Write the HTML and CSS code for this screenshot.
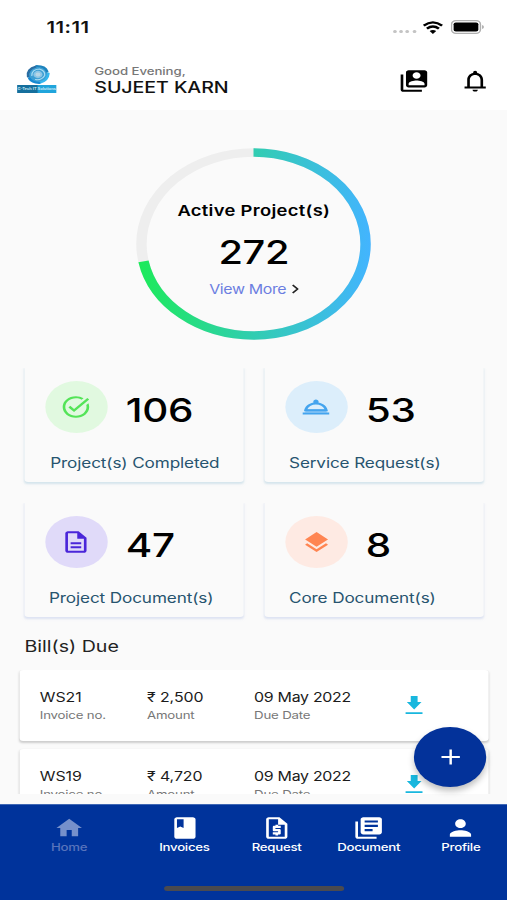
FILE: index.html
```html
<!DOCTYPE html>
<html lang="en">
<head>
<meta charset="utf-8">
<meta name="viewport" content="width=device-width, initial-scale=1">
<title>Dashboard</title>
<link rel="stylesheet" href="styles.css">
</head>
<body>
<div class="app">
  <header class="top">
    <div class="status">
      <span class="time">11:11</span>
      <div class="status-icons">
        <span class="dots"><i></i><i></i><i></i><i></i></span>
        <svg class="wifi" viewBox="0 0 17 13" preserveAspectRatio="none"><path d="M1 4.7Q8.500-1.900 16 4.700M3.600 7.600Q8.500 3.400 13.400 7.600" fill="none" stroke="#000" stroke-width="2.200"/><path d="M5.800 10q2.700-2.200 5.400 0l-2.700 3z"/></svg>
        <svg class="battery" viewBox="0 0 28 14"><rect x=".7" y=".7" width="23.600" height="12.600" rx="3.600" fill="none" stroke="#b0b0b0" stroke-width="1.200"/><rect x="2.400" y="2.500" width="20.200" height="9" rx="1.800"/><path d="M25.800 5v4q1.200-.6 1.200-2t-1.200-2z" fill="#999"/></svg>
      </div>
    </div>
    <div class="bar">
      <div class="logo">
        <svg class="swirl" viewBox="0 0 20 20"><circle cx="10" cy="10" r="8.200" fill="#3d9fd4"/><g fill="none" stroke-width="2.200" stroke-linecap="round"><path d="M2 12A8.300 8.300 0 0 1 8 2.200" stroke="#2a6da2"/><path d="M9 1.500Q16 1.500 17.500 7" stroke="#1d83bd"/><path d="M18.500 9Q18 16 12 18" stroke="#35b7ee"/><path d="M11 18.500Q5 18 3 14" stroke="#1689d2"/><path d="M5 11Q5 5 11 4.500M11 4.500Q16 6 15.500 11M15.500 11Q13 16 8 15" stroke="#a8dcf3" stroke-width="1"/></g><circle cx="10" cy="10" r="3.700" fill="#8cc5e5"/><circle cx="10" cy="10" r="2" fill="#b7d6e6"/></svg>
        <span class="logo-name">G-Tech IT Solutions</span>
      </div>
      <div class="greet">
        <span class="hello">Good Evening,</span>
        <span class="user">SUJEET KARN</span>
      </div>
      <svg class="icon accounts" viewBox="0 0 24 24"><path d="M4 6H2v14c0 1.100.9 2 2 2h14v-2H4V6zm16-4H8c-1.100 0-2 .9-2 2v12c0 1.100.9 2 2 2h12c1.100 0 2-.9 2-2V4c0-1.100-.9-2-2-2zm-6 2c1.660 0 3 1.340 3 3s-1.340 3-3 3-3-1.340-3-3 1.340-3 3-3zm6 12H8v-1.500c0-1.990 4-3 6-3s6 1.010 6 3V16z"/></svg>
      <svg class="icon bell" viewBox="0 0 24 24"><path fill-rule="evenodd" d="M10 20h4c0 1.100-.9 1.800-2 1.800s-2-.7-2-1.800zM4 17h2v-6c0-3.070 1.640-5.640 4.500-6.320V4c0-.83.67-1.500 1.500-1.500s1.500.67 1.500 1.500v.68C16.370 5.360 18 7.930 18 11v6h2v2H4zm4 0h8v-6c0-2.480-1.510-4.500-4-4.500S8 8.520 8 11z"/></svg>
    </div>
  </header>

  <main class="content">
    <section class="ring">
      <svg class="ring-art" viewBox="0 0 192 192">
        <defs><linearGradient id="sweep" gradientUnits="userSpaceOnUse" x1="0" y1="0" x2="0" y2="192"><stop offset="0" stop-color="#1ceb58"/><stop offset=".5" stop-color="#31cdb1"/><stop offset="1" stop-color="#43b4ff"/></linearGradient></defs>
        <circle cx="96" cy="96" r="91.500" fill="none" stroke="#eee" stroke-width="8.500"/>
        <circle cx="96" cy="96" r="91.500" fill="none" stroke="url(#sweep)" stroke-width="8.500" pathLength="100" stroke-dasharray="72 100" transform="rotate(-90 96 96)"/>
      </svg>
      <div class="ring-text">
        <span class="ring-title">Active Project(s)</span>
        <span class="ring-value">272</span>
        <span class="more">View More <svg viewBox="0 0 6 10"><path d="M1 1l4 4-4 4" fill="none" stroke="#222" stroke-width="1.500"/></svg></span>
      </div>
    </section>

    <section class="cards">
      <article class="card green">
        <div class="card-top"><span class="disc"><svg class="icon" viewBox="0 0 24 24"><path d="M22 5.180L10.590 16.600l-4.240-4.240 1.410-1.410 2.830 2.830 10-10L22 5.180zm-2.210 5.040c.13.57.21 1.170.21 1.780 0 4.420-3.580 8-8 8s-8-3.580-8-8 3.580-8 8-8c1.580 0 3.040.46 4.280 1.250l1.440-1.440C16.100 2.670 14.130 2 12 2 6.480 2 2 6.480 2 12s4.480 10 10 10 10-4.480 10-10c0-1.190-.22-2.330-.6-3.390l-1.610 1.610z"/></svg></span><span class="count">106</span></div>
        <span class="label l1">Project(s) Completed</span>
      </article>
      <article class="card blue">
        <div class="card-top"><span class="disc"><svg class="icon" viewBox="0 0 24 24"><path d="M5 14h14l1.500 3h-17z" opacity=".55"/><path fill-rule="evenodd" d="M2 17h20v2H2zM13.840 7.790c.1-.24.16-.51.16-.79 0-1.100-.9-2-2-2s-2 .9-2 2c0 .28.06.55.16.79C6.250 8.600 3.270 11.930 3 16h18c-.27-4.070-3.250-7.400-7.160-8.210zM12 9.580c2.950 0 5.470 1.830 6.500 4.410h-13c1.030-2.580 3.550-4.410 6.500-4.410z"/></svg></span><span class="count">53</span></div>
        <span class="label l2">Service Request(s)</span>
      </article>
      <article class="card violet">
        <div class="card-top"><span class="disc"><svg class="icon" viewBox="0 0 24 24"><path d="M8 16h8v1.700H8zm0-3.700h8V14H8zM14 2H6c-1.100 0-2 .9-2 2v16c0 1.100.89 2 1.990 2H18c1.100 0 2-.9 2-2V8l-6-6zm4 18H6V4h7v5h5v11z"/></svg></span><span class="count">47</span></div>
        <span class="label l3">Project Document(s)</span>
      </article>
      <article class="card orange">
        <div class="card-top"><span class="disc"><svg class="icon layers" viewBox="0 0 24 24"><path d="M11.990 18.540l-7.370-5.730L3 14.070l9 7 9-7-1.630-1.270-7.380 5.740zM12 16l7.360-5.730L21 9l-9-7-9 7 1.630 1.270L12 16z"/></svg></span><span class="count">8</span></div>
        <span class="label l4">Core Document(s)</span>
      </article>
    </section>

    <h2 class="bills-title">Bill(s) Due</h2>
    <section class="bills">
      <article class="bill">
        <div class="cell"><b>WS21</b><small>Invoice no.</small></div>
        <div class="cell"><b>₹ 2,500</b><small>Amount</small></div>
        <div class="cell date"><b>09 May 2022</b><small>Due Date</small></div>
        <svg class="dl" viewBox="0 0 14.400 18.500"><path d="M4.400 0h5.600v6h3.200l-6 7.500-6-7.500h3.200zM0 16.300h14.400v2.200H0z"/></svg>
      </article>
      <article class="bill">
        <div class="cell"><b>WS19</b><small>Invoice no.</small></div>
        <div class="cell"><b>₹ 4,720</b><small>Amount</small></div>
        <div class="cell date"><b>09 May 2022</b><small>Due Date</small></div>
        <svg class="dl" viewBox="0 0 14.400 18.500"><path d="M4.400 0h5.600v6h3.200l-6 7.500-6-7.500h3.200zM0 16.300h14.400v2.200H0z"/></svg>
      </article>
    </section>
    <button class="fab" aria-label="Add"><svg viewBox="0 0 16 16"><path d="M8 .5v15M.5 8h15" stroke="#fff" stroke-width="2"/></svg></button>
  </main>

  <nav class="nav">
    <div class="tabs">
      <a class="tab active"><svg class="icon" viewBox="0 0 24 24"><path d="M10 20v-6h4v6h5v-8h3L12 3 2 12h3v8z"/></svg><span>Home</span></a>
      <a class="tab"><svg class="icon" viewBox="0 0 24 24"><path fill-rule="evenodd" d="M18 2H6c-1.100 0-2 .9-2 2v16c0 1.100.9 2 2 2h12c1.100 0 2-.9 2-2V4c0-1.100-.9-2-2-2zM6 4h5v8l-2.500-1.500L6 12V4z"/></svg><span>Invoices</span></a>
      <a class="tab"><svg class="icon" viewBox="0 0 24 24"><path fill-rule="evenodd" d="M14 2H6c-1.100 0-2 .9-2 2v16c0 1.100.9 2 2 2h12c1.100 0 2-.9 2-2V8zM6 20V4h7v5h5v11z"/><path d="M11 19h2v-1h1c.55 0 1-.45 1-1v-3c0-.55-.45-1-1-1h-3v-1h4v-2h-2V9h-2v1h-1c-.55 0-1 .45-1 1v3c0 .55.45 1 1 1h3v1H9v2h2z"/></svg><span>Request</span></a>
      <a class="tab"><svg class="icon" viewBox="0 0 24 24"><path fill-rule="evenodd" d="M4 6H2v14c0 1.100.9 2 2 2h14v-2H4zM20 2H8c-1.100 0-2 .9-2 2v12c0 1.100.9 2 2 2h12c1.100 0 2-.9 2-2V4c0-1.100-.9-2-2-2zM19 7H9V5h10zM19 11H9V9h10zM15 15H9v-2h6z"/></svg><span>Document</span></a>
      <a class="tab"><svg class="icon" viewBox="0 0 24 24"><path d="M12 12c2.210 0 4-1.790 4-4s-1.790-4-4-4-4 1.790-4 4 1.790 4 4 4zm0 2c-2.670 0-8 1.340-8 4v2h16v-2c0-2.660-5.330-4-8-4z"/></svg><span>Profile</span></a>
    </div>
    <div class="home-bar"></div>
  </nav>
</div>
</body>
</html>
```
FILE: styles.css
```css
* { box-sizing: border-box; }
html, body { margin: 0; width: 507px; height: 900px; overflow: hidden; }
body { font-family: Inter, "Liberation Sans", sans-serif; color: #111; background: #fafafa; }

/* 414-unit wide phone layout, widened to fill the viewport */
.app {
  width: 414px; height: 900px;
  display: flex; flex-direction: column;
  transform: scaleX(1.22464); transform-origin: 0 0;
  background: #fafafa;
}
.icon { display: block; width: 26px; height: 26px; fill: currentColor; flex: none; }
span, b, small, h2 { white-space: nowrap; }

.top { height: 110px; background: #fff; flex: none; }
.status { height: 54px; padding: 0 18px 0 38px; display: flex; justify-content: space-between; align-items: center; }
.time { font-size: 16.500px; font-weight: 600; letter-spacing: .4px; color: #111; }
.status-icons { display: flex; align-items: center; gap: 6px; }
.dots { display: flex; gap: 2.2px; padding-top: 9px; margin-right: -.5px; }
.dots i { width: 3px; height: 3.500px; border-radius: 50%; background: #c4c4c4; }
.wifi { width: 17px; height: 13px; }
.battery { width: 28px; height: 14px; }

.bar { height: 56px; display: flex; align-items: center; padding-left: 14px; }
.logo { width: 32px; height: 30px; display: flex; flex-direction: column; align-items: center; margin-top: -6px; }
.swirl { width: 20px; height: 21px; flex: none; margin-left: 1.5px; }
.logo-name {
  width: 32px; height: 8px; line-height: 8px; text-align: center;
  font-size: 3.300px; font-weight: 600; color: #d9f0fa;
  background: linear-gradient(90deg, #156f9d 50%, #20a5dc 55%);
}
.greet { display: flex; flex-direction: column; width: 249px; margin-left: 31px; margin-top: -4px; }
.hello { font-size: 10.800px; line-height: 14px; letter-spacing: -.05px; color: #777; font-weight: 500; }
.user { font-size: 16px; line-height: 16px; letter-spacing: -.05px; font-weight: 500; color: #111; }
.accounts { margin: -2px 0 0 -1px; color: #000; }
.bell { margin: -2px 0 0 24px; color: #000; }

.content { flex: 1; min-height: 0; position: relative; }
.ring { height: 229px; padding-top: 38px; display: grid; justify-content: center; }
.ring > * { grid-area: 1 / 1; }
.ring-art { width: 192px; height: 192px; margin-left: .5px; }
.ring-text { width: 192px; height: 192px; display: flex; flex-direction: column; align-items: center; padding-top: 53px; margin-left: .5px; }
.ring-title { font-size: 15px; line-height: 20px; font-weight: 600; letter-spacing: .25px; color: #000; }
.ring-value { font-size: 32.500px; line-height: 40px; margin-top: 12px; font-weight: 450; letter-spacing: -.3px; color: #000; }
.more { font-size: 13px; line-height: 18px; margin-top: 7px; color: #6c7ee1; letter-spacing: -.3px; display: flex; align-items: center; gap: 4px; }
.more svg { width: 6px; height: 10px; }

.cards { display: grid; grid-template-columns: 179.500px 179.500px; column-gap: 16.500px; row-gap: 19px; padding: 27px 19px 0 19.500px; }
.card { height: 116px; padding: 15px 0 0 17px; border-radius: 3px; clip-path: inset(2px -5px -5px -5px); background: #fafafa; }
.green, .blue { box-shadow: 0 1.500px 2px rgba(180, 210, 224, .55); }
.violet, .orange { box-shadow: 0 1.500px 2px rgba(195, 205, 235, .55); }
.card-top { display: flex; align-items: center; height: 52px; }
.disc { width: 51px; height: 52px; border-radius: 50%; display: grid; place-items: center; }
.layers { width: 25px; height: 25px; }
.count { font-size: 33px; line-height: 40px; font-weight: 450; letter-spacing: -.3px; color: #000; margin: 5px 0 0 15.200px; }
.green .disc { background: #e1f9e0; color: #54e458; }
.blue .disc { background: #dceefb; color: #44a4ee; }
.violet .disc { background: #e0daf9; color: #4a26d9; }
.orange .disc { background: #feeae3; color: #ff8552; }
.label { display: block; margin-top: 20px; font-size: 14px; line-height: 20px; letter-spacing: -.1px; color: #27546f; }
.l1 { padding-left: 4.500px; }
.l2 { padding-left: 3.500px; }
.l3 { padding-left: 3.500px; }
.l4 { padding-left: 3.500px; }

.bills-title { margin: 18px 0 0 20px; font-size: 16px; line-height: 22px; font-weight: 400; letter-spacing: 0; color: #222; }
.bills { margin-top: 13px; padding: 0 15.500px; height: 124px; overflow: hidden; display: flex; flex-direction: column; gap: 8px; }
.bill {
  height: 71px; flex: none; display: grid; grid-template-columns: 87.500px 87.500px 123.500px 15px;
  padding: 18px 0 0 17px; background: #fff; border-radius: 3px; box-shadow: 0 1.500px 2px rgba(0, 0, 0, .18);
}
.cell { display: flex; flex-direction: column; }
.cell b { font-size: 13px; line-height: 18px; font-weight: 400; letter-spacing: -.05px; color: #1b1b1b; }
.date b { letter-spacing: -.25px; }
.cell small { font-size: 10.800px; line-height: 19px; letter-spacing: -.15px; color: #777; }
.dl { width: 14.400px; height: 18.500px; fill: #18b7de; margin-top: 7.500px; }
.fab {
  position: absolute; right: 17px; top: 617px; width: 59px; height: 60px; padding: 0; border: 0; border-radius: 50%;
  background: #03329a; display: grid; place-items: center; box-shadow: 0 4px 6px rgba(0, 0, 0, .25);
}
.fab svg { width: 16px; height: 16px; }

.nav { height: 96px; flex: none; background: #00339b; border-top: 1px solid #4068b5; color: #fff; position: relative; }
.tabs { display: grid; grid-template-columns: 113px repeat(4, 75.250px); height: 81px; padding-top: 10px; }
.tab { display: flex; flex-direction: column; align-items: center; }
.tab span { font-size: 10.800px; line-height: 13px; font-weight: 500; letter-spacing: -.2px; }
.tab.active .icon { width: 25px; }
.active { color: #7690cb; }
.active span { color: #5874bb; }
.home-bar { width: 147px; height: 5px; border-radius: 3px; background: #4a4a4f; margin: 0 auto; }
```
